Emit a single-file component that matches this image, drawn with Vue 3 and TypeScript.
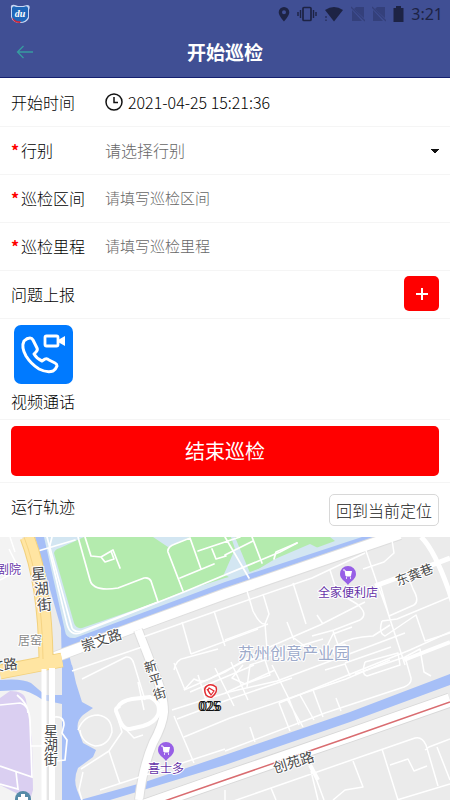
<script setup lang="ts">
import { ref } from 'vue'

interface TextField {
  id: string
  label: string
  placeholder: string
}

interface MapLabel {
  text: string
  x: number
  y: number
  size: number
  kind: string
  rotate: number
}

const startTime = '2021-04-25 15:21:36'
const direction = ref('')
const values = ref<Record<string, string>>({ section: '', mileage: '' })

const fields: TextField[] = [
  { id: 'section', label: '巡检区间', placeholder: '请填写巡检区间' },
  { id: 'mileage', label: '巡检里程', placeholder: '请填写巡检里程' },
]

const labels: MapLabel[] = [
  { text: '剧院', x: 9, y: 574, size: 12, kind: 'poi', rotate: 0 },
  { text: '居窑', x: 30, y: 645, size: 12, kind: 'muted', rotate: 0 },
  { text: '文路', x: 4, y: 670, size: 14, kind: 'road', rotate: -6 },
  { text: '崇文路', x: 103, y: 645, size: 14, kind: 'road', rotate: -19 },
  { text: '东龚巷', x: 416, y: 579, size: 13, kind: 'road', rotate: -21 },
  { text: '创苑路', x: 295, y: 767, size: 14, kind: 'road', rotate: -17 },
  { text: '全家便利店', x: 348, y: 597, size: 12, kind: 'poi', rotate: 0 },
  { text: '喜士多', x: 166, y: 773, size: 12, kind: 'poi', rotate: 0 },
  { text: '苏州创意产业园', x: 294, y: 659, size: 16, kind: 'area', rotate: 0 },
  { text: '星', x: 39, y: 579, size: 15, kind: 'road', rotate: -5 },
  { text: '湖', x: 42, y: 594, size: 15, kind: 'road', rotate: -5 },
  { text: '街', x: 45, y: 610, size: 15, kind: 'road', rotate: -5 },
  { text: '星', x: 51, y: 736, size: 14, kind: 'road', rotate: 0 },
  { text: '湖', x: 51, y: 750, size: 14, kind: 'road', rotate: 0 },
  { text: '街', x: 51, y: 764, size: 14, kind: 'road', rotate: 0 },
  { text: '新', x: 152, y: 671, size: 13, kind: 'road', rotate: -17 },
  { text: '平', x: 157, y: 684, size: 13, kind: 'road', rotate: -17 },
  { text: '街', x: 161, y: 698, size: 13, kind: 'road', rotate: -17 },
]
</script>

<template>
  <div class="page">
    <header class="header">
      <div class="status">
        <svg class="app-badge" viewBox="0 0 20 20" aria-hidden="true">
          <path d="M1 4Q0 0 5 1L8 2h5l4-1q4 0 2 5v8q-2 5-9 5T1 13Z" fill="#c9d7f3" />
          <path d="M2 4q1-3 4-1h8q3-2 4 1v9q-2 5-8 5T2 13Z" fill="#1e66b8" />
          <path d="M2 13q3 5 9 4l-1 2q-7 0-8-6Z" fill="#c9253b" />
          <text x="10" y="13" text-anchor="middle" class="badge-text">du</text>
        </svg>
        <div class="status-icons">
          <svg width="12" height="16" viewBox="0 0 12 16" aria-hidden="true">
            <path fill-rule="evenodd" d="M6 1a5.300 5.300 0 0 0-5.300 5.300C.7 10 6 15.500 6 15.500s5.300-5.500 5.300-9.200A5.300 5.300 0 0 0 6 1Zm0 3.300a2 2 0 1 1 0 4 2 2 0 0 1 0-4Z" fill="#1d2344" />
          </svg>
          <svg width="20" height="16" viewBox="0 0 20 16" fill="none" stroke="#1d2344" aria-hidden="true">
            <rect x="6" y="1.500" width="8" height="13" rx="1" stroke-width="1.700" />
            <path d="M3.500 4v8M1 6v4M16.500 4v8M19 6v4" stroke-width="1.400" />
          </svg>
          <svg width="20" height="16" viewBox="0 0 20 16" aria-hidden="true">
            <path d="M1 4q9-6 18 0l-9 11.500Z" fill="#1d2344" />
            <path d="M2 10v2M2 13.500v1.500" stroke="#1d2344" />
          </svg>
          <svg v-for="n in 2" :key="n" width="14" height="16" viewBox="0 0 14 16" aria-hidden="true">
            <path d="M5 1h8v11L3 3ZM1 4l10 11H1Z" fill="#34407b" />
            <path d="m0 1 14 14" stroke="#34407b" stroke-width="1.300" />
          </svg>
          <svg width="11" height="16" viewBox="0 0 11 16" aria-hidden="true">
            <path d="M3 0h5v2h2.500v14H.5V2H3Z" fill="#1d2344" />
          </svg>
          <span class="clock">3:21</span>
        </div>
      </div>
      <div class="nav">
        <button class="back" type="button" aria-label="返回">
          <svg width="18" height="14" viewBox="0 0 18 14" fill="none" stroke="#379ca0" stroke-width="1.300" aria-hidden="true">
            <path d="M17 7H1.500M7.500 1l-6 6 6 6" />
          </svg>
        </button>
        <h1>开始巡检</h1>
      </div>
    </header>

    <main>
      <div class="row">
        <span class="label">开始时间</span>
        <svg class="clock-icon" viewBox="0 0 18 18" fill="none" stroke="#111" stroke-width="1.500" aria-hidden="true">
          <circle cx="9" cy="9" r="8" />
          <path d="M9 4v5.500h4" />
        </svg>
        <time class="time">{{ startTime }}</time>
      </div>

      <div class="row">
        <label class="label required" for="direction">行别</label>
        <select id="direction" v-model="direction" class="select">
          <option value="" disabled>请选择行别</option>
          <option value="up">上行</option>
          <option value="down">下行</option>
        </select>
      </div>

      <div v-for="field in fields" :key="field.id" class="row">
        <label class="label required" :for="field.id">{{ field.label }}</label>
        <input :id="field.id" v-model="values[field.id]" type="text" class="input" :placeholder="field.placeholder" />
      </div>

      <div class="row spread">
        <span class="label">问题上报</span>
        <button class="add" type="button" aria-label="添加问题">
          <svg width="12" height="12" viewBox="0 0 12 12" stroke="#fff" stroke-width="2" aria-hidden="true">
            <path d="M6 0v12M0 6h12" />
          </svg>
        </button>
      </div>

      <div class="video">
        <button class="call" type="button">
          <svg class="call-icon" viewBox="0 0 59 59" fill="none" stroke="#fff" aria-hidden="true">
            <rect width="59" height="59" rx="7" fill="#007aff" stroke="none" />
            <path d="M10 16Q13 13 16 13Q18 13 19 15L23 23Q24 25 22 27L20 29Q23 34 28 36L31 34Q33 33 35 35L41 38Q43 39 43 41Q42 44 39 46Q33 48 25 44Q17 39 12 31Q7 22 10 16Z" stroke-width="3" stroke-linejoin="round" />
            <rect x="31" y="11" width="13" height="10" rx="1.500" stroke-width="2.800" />
            <path d="m44 15 7-4v10l-7-4Z" fill="#fff" stroke="none" />
          </svg>
          <span>视频通话</span>
        </button>
      </div>

      <div class="finish-wrap">
        <button class="finish" type="button">结束巡检</button>
      </div>

      <div class="track">
        <h2>运行轨迹</h2>
        <button class="locate" type="button">回到当前定位</button>
      </div>

      <svg class="map" viewBox="0 537 450 263" role="img" aria-label="运行轨迹地图">
        <rect y="537" width="450" height="263" fill="#ebebeb" />
        <path d="M0 537H22L42 600V660L0 664ZM0 686h26l18 14v100H0Z" fill="#f3f3f3" />

        <g fill="#d3e6f2">
          <path d="M42 537H375L225 588 72 641 64 632Z" />
        </g>
        <path d="M54 553Q55 549 60 548L84 537H153L168 547 190 537H330L335 541 275 563 250 572 225 578 182 592 160 601 82 628Q76 629 74 623Z" fill="#b4ebae" />
        <path d="m235 537 15 36-18 6-8-5 11-25-4-12Z" fill="#d3e6f2" />
        <path d="M275 559 310 544 318 548 252 573Z" fill="#d3e6f2" />

        <g fill="#a6bff7">
          <path d="M35 537h9l21 94q1 8 10 7L225 582 362 537h25L225 595 68 651 73 670H62L61 628Z" />
          <path d="M62 665H72L76 683 82 702 93 708 83 715Q76 721 78 730L83 743 96 750 93 757 78 768Q73 779 77 790L81 800H62V704L43 700Q28 690 20 690L0 691V680Q22 678 31 683L45 695H62Z" />
          <path d="M80 800 145 782 225 755 350 712 450 674V685L350 722 225 765 130 794 110 800Z" />
        </g>

        <g fill="none" stroke="#fff" stroke-linecap="round" stroke-linejoin="round" stroke-width="1.700">
          <path d="M47 537 72 628Q75 633 82 631L158 602 151 581Q149 577 144 578L118 588Q93 592 90 580L78 537" />
          <path d="M52 537 49 549 67 624Q70 636 80 633L184 592 280 552 297 543M38 551 75 540M85 537 91 556 101 557 113 550 120 568M101 557 105 562 114 559 111 551" />
          <path d="M183 591 168 552Q167 547 175 544L190 538 201 569M180 578 214 564M198 551 240 537M212 549 216 559 226 556M225 537 249 578M225 555 253 541M252 537 262 563M274 559 276 552 297 543" />
        </g>

        <path d="M55 657 135 627 225 594 400 534" fill="none" stroke="#dedede" stroke-width="12" />
        <path d="M55 657 135 627 225 594 400 534" fill="none" stroke="#fff" stroke-width="10" />
        <path d="M138 630 152 666Q164 693 164 712Q163 725 153 743Q143 766 139 800" fill="none" stroke="#dedede" stroke-width="10" />
        <path d="M138 630 152 666Q164 693 164 712Q163 725 153 743Q143 766 139 800" fill="none" stroke="#fff" stroke-width="8" />

        <g fill="none" stroke="#fff" stroke-linejoin="round" stroke-width="1.500">
          <path d="M143 637 225 608 312 578 365 553M138 682 144 710M72 671 145 646M82 679 126 657Q132 656 134 664L145 700" />
          <path d="M182 622 191 654M214 611 225 646M191 654 258 629M174 670Q176 659 185 658L218 649M184 690 225 672 260 650M185 690 174 663" />
          <path d="M247 591 253 611Q260 625 265 624L269 614 263 594M265 624 267 649M293 583 306 624M265 649 320 625 365 602M287 622 294 640M317 615 323 624M330 570 337 592 357 604Q369 614 360 620L334 630 312 636" />
          <path d="M225 640 268 624M294 638 315 654 326 648 333 634 352 627M333 631 338 645Q350 637 373 636L390 625M337 645Q343 642 347 646Q350 652 344 657Q337 660 334 654Q332 648 337 645" />
          <path d="M363 542 377 583 387 610 405 665M363 569 384 562 394 553 392 540M380 584 389 616 414 605Q420 601 413 589L408 576M382 621 397 619 450 597M382 621Q378 633 385 636L416 615 425 641 450 633M365 662 398 653 400 665 367 676Q361 675 365 662" />
          <path d="M172 710 229 692 277 681 405 633M177 719 230 699 292 678M174 716 194 763M184 737 230 718 346 679 390 660M184 690 194 679Q203 684 213 677L243 662 270 655 323 639M198 675 209 710M215 668 234 706M231 662 248 700M190 692 254 665" />
          <path d="M243 665 232 678 245 684 270 675 265 660 250 665 247 687M225 693 251 681 275 670M272 665 289 699 299 725M279 703 290 731M287 699 303 727M300 695 314 720M313 690 323 717M336 698 341 711M250 727 255 742" />
          <path d="M279 703 410 650 450 632M325 670 345 664 350 676M345 663 391 647M355 674 405 657 411 678Q412 684 404 687L325 713 225 751M405 657 420 649 424 672 431 676" />
          <path d="M225 804 271 788 363 756 415 738Q422 736 426 745L438 786M311 771 318 800M353 761 363 787 345 790 333 800M382 749 398 800M390 765 408 759 414 771 427 766M425 750 429 747 450 739M437 747 450 780M397 800 450 784M271 788 276 800" />
          <path d="M225 790 225 805M314 773 324 800M109 751 120 784M109 751 122 732 119 722 134 738 143 735M109 751 81 769M100 790 225 749M83 772 79 790 82 800" />
          <path d="M78 730Q84 715 98 715Q112 717 112 732Q108 746 95 746Q81 742 80 730" />
          <path d="M118 707Q121 701 132 699L150 697Q162 703 158 715Q154 723 143 726L130 729Q124 730 120 721L116 711Q115 708 120 706" stroke-width="4" />
          <path d="M9 549 17 565M0 580 13 573M10 537 15 552" />
        </g>

        <g stroke="#fff" fill="none">
          <path d="M375 586 397 578M424 568 450 558" stroke-width="5" />
          <path d="M421 537Q434 549 449 591L455 610" stroke-width="5" />
          <path d="M404 660 450 642" stroke-width="4" />
          <path d="M310 765 318 780" stroke-width="4" />
        </g>

        <path d="M0 672 62 660M27 537Q45 583 46 659" fill="none" stroke="#f2d17d" stroke-width="15" />
        <path d="M0 672 62 660M27 537Q45 583 46 659" fill="none" stroke="#ffe5a2" stroke-width="13" />
        <path d="M24 537Q42 583 43 659" fill="none" stroke="#f6d484" stroke-width="1" />

        <path d="M0 698 10 691Q24 691 26 700L32 740 33 790 30 800 0 785Z" fill="#dacff1" />
        <path d="M0 705 20 703Q29 705 30 720L32 777 0 766M17 695Q28 704 28 713M31 746H43M16 772 18 789 0 784" fill="none" stroke="#fff" stroke-width="1.700" />
        <path d="M44 669V800" stroke="#fff" stroke-width="5" />
        <path d="M52 668V800" stroke="#fff" stroke-width="6" />
        <path d="M48 670V800" stroke="#dedede" stroke-width="1" />
        <path d="M55 717Q64 716 64 725L62 733 67 740 65 760 56 761" fill="none" stroke="#fff" stroke-width="1.700" />

        <path d="M145 806 225 778 350 735 450 700" fill="none" stroke="#d8d8d8" stroke-width="15" />
        <path d="M145 806 225 778 350 735 450 700" fill="none" stroke="#fff" stroke-width="13" />
        <path d="M150 806 225 780 350 737 450 702" fill="none" stroke="#d96c70" stroke-width="1.500" />

        <g fill="#975fe6">
          <path d="M348 566a8 8 0 0 1 8 8c0 5-5 7-8 11-3-4-8-6-8-11a8 8 0 0 1 8-8Z" />
          <path d="M166 742a8 8 0 0 1 8 8c0 5-5 7-8 11-3-4-8-6-8-11a8 8 0 0 1 8-8Z" />
        </g>
        <g v-for="spot in [[348, 574], [166, 750]]" :key="spot[0]" :transform="`translate(${spot[0]} ${spot[1]})`">
          <path d="M-5-4h2l1 6h5" fill="none" stroke="#fff" />
          <path d="M-3-3h7L3 2h-5Z" fill="#fff" />
          <path d="M-2 4h1M2 4h1" stroke="#fff" stroke-width="1.500" />
        </g>
        <circle cx="23" cy="799" r="8" fill="#568ba8" />
        <path d="M18 800v-3h3v-3h4v3h3v3" fill="#fff" />

        <text
          v-for="(label, index) in labels"
          :key="index"
          :class="['map-text', label.kind]"
          :font-size="label.size"
          :transform="`translate(${label.x} ${label.y}) rotate(${label.rotate})`"
          text-anchor="middle"
        >{{ label.text }}</text>

        <path d="M206 695Q203 688 207 686Q211 683 216 687Q218 692 212 697Q209 698 206 695Z" fill="#fff" stroke="#e32b31" stroke-width="1.500" />
        <path d="m207 689 3 5M209 688l5 3-3 4-3-5Z" fill="none" stroke="#e32b31" stroke-width="1.200" />
        <g class="marker-text">
          <text x="198" y="711">025</text>
          <text x="200" y="711">026</text>
        </g>
      </svg>
    </main>
  </div>
</template>

<style>
body {
  margin: 0;
  background: #fff;
}
</style>

<style scoped>
.page {
  font-family: "Noto Sans CJK SC", "Noto Sans", sans-serif;
  font-size: 16px;
  font-weight: 300;
  line-height: 24px;
  color: #000;
  overflow: hidden;
}

button,
input,
select {
  font: inherit;
  margin: 0;
  padding: 0;
  border: 0;
  background: none;
}

.header {
  background: #404f94;
  border-bottom: 1px solid #15206f;
}

.status {
  display: flex;
  justify-content: space-between;
  align-items: center;
  height: 27px;
  padding: 0 7px 0 10px;
}

.app-badge {
  width: 20px;
  height: 20px;
}

.badge-text {
  font: italic bold 10px "Liberation Serif", serif;
  fill: #fff;
}

.status-icons {
  display: flex;
  align-items: center;
  gap: 7px;
}

.clock {
  font-family: "Noto Sans", sans-serif;
  font-weight: 400;
  color: #1d2344;
}

.nav {
  display: grid;
  grid-template-columns: 34px 1fr 34px;
  align-items: center;
  height: 50px;
  padding: 0 8px;
}

.back {
  display: flex;
  align-items: center;
  justify-content: center;
  height: 34px;
}

h1 {
  margin: 0;
  font-size: 19px;
  font-weight: 700;
  text-align: center;
  color: #fff;
}

main {
  padding-top: 1px;
}

.row {
  display: flex;
  align-items: center;
  height: 45px;
  padding: 0 11px 2px;
  border-bottom: 1px solid #f5f5f5;
}

.spread {
  justify-content: space-between;
}

.label {
  flex: none;
  width: 94px;
}

.required::before {
  content: "*";
  display: inline-block;
  width: 10px;
  font-weight: 700;
  color: #f00;
}

.clock-icon {
  width: 18px;
  height: 18px;
  margin-right: 5px;
}

.select,
.input {
  flex: 1;
  min-width: 0;
  height: 40px;
  outline: none;
}

.select {
  appearance: none;
  color: #666;
  background: conic-gradient(from -45deg at 50% 100%, #111 90deg, transparent 0) right center / 8px 4px no-repeat;
  background: conic-gradient(from -45deg at 50% 100%, #111 90deg, transparent 0) right 19px / 8px 4px no-repeat;
}

.input {
  font-size: 15px;
}

.input::placeholder {
  color: #666;
  opacity: 1;
}

.add {
  display: flex;
  align-items: center;
  justify-content: center;
  width: 35px;
  height: 35px;
  border-radius: 5px;
  background: #f00;
}

.video {
  display: flex;
  padding: 6px 11px;
  border-bottom: 1px solid #f5f5f5;
}

.call {
  display: flex;
  flex-direction: column;
  align-items: center;
  gap: 5px;
  color: #000;
}

.call-icon {
  width: 59px;
  height: 59px;
}

.finish-wrap {
  padding: 6px 11px;
  border-bottom: 1px solid #f5f5f5;
}

.finish {
  display: block;
  width: 100%;
  height: 50px;
  border-radius: 5px;
  background: #f00;
  font-size: 20px;
  font-weight: 400;
  color: #fff;
}

.track {
  display: flex;
  align-items: flex-start;
  justify-content: space-between;
  padding: 11px;
}

h2 {
  margin: 0;
  font-size: 16px;
  font-weight: 300;
}

.locate {
  height: 32px;
  padding: 0 6px;
  border: 1px solid #d8d8d8;
  border-radius: 5px;
  color: #222;
}

.map {
  display: block;
  width: 100%;
}

.map-text {
  font-weight: 400;
  paint-order: stroke;
  stroke: #fff;
  stroke-width: 2px;
  stroke-linejoin: round;
}

.road {
  fill: #4a4a4a;
}

.poi {
  fill: #6634a8;
}

.muted {
  fill: #888;
}

.area {
  fill: #9daaca;
}

.marker-text {
  font-size: 13px;
  font-weight: 400;
  fill: #111;
}
</style>
